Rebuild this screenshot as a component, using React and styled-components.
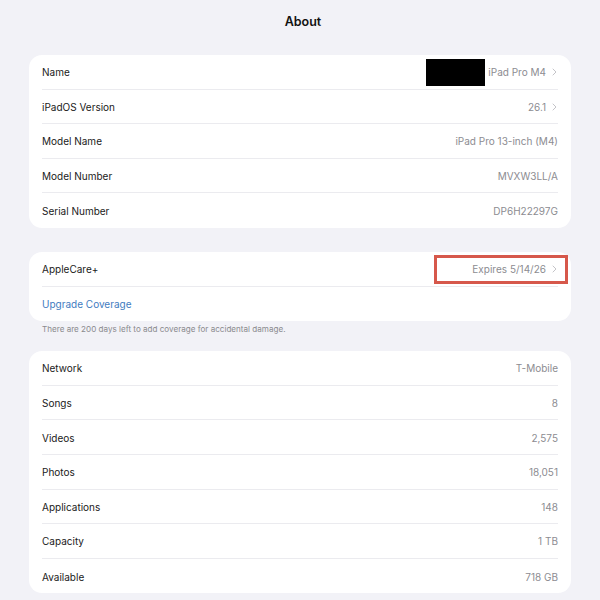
import React from "react";
import styled, { createGlobalStyle } from "styled-components";

const Global = createGlobalStyle`
  html, body { margin: 0; padding: 0; background: #f2f2f7; }
  body { font-family: Inter, "Noto Sans", Roboto, sans-serif; -webkit-font-smoothing: antialiased; }
`;

const Page = styled.div`
  width: 600px;
  height: 600px;
  box-sizing: border-box;
  padding: 0 29px;
  display: flex;
  flex-direction: column;
  background: #f2f2f7;
  overflow: hidden;
`;

const Title = styled.div`
  height: 43px;
  line-height: 43px;
  margin-bottom: 12px;
  text-align: center;
  padding-left: 6px;
  font-size: 12.5px;
  font-weight: 600;
  color: #111;
`;

const Card = styled.div`
  background: #fff;
  border-radius: 13px;
  margin-top: ${(p) => p.$mt || 0}px;
  display: flex;
  flex-direction: column;
`;

const Row = styled.div`
  height: 34.6px;
  padding: 0 13px;
  display: flex;
`;

const RowInner = styled.div`
  flex: 1;
  display: flex;
  align-items: center;
  justify-content: space-between;
  border-bottom: ${(p) => (p.$last ? "none" : "1px solid #ebebef")};
  box-sizing: border-box;
  padding-top: 1px;
`;

const Label = styled.span`
  font-size: 10px;
  color: ${(p) => (p.$link ? "#3f7cbf" : "#1a1a1a")};
`;

const Value = styled.span`
  position: relative;
  display: flex;
  align-items: center;
  font-size: 10px;
  color: #8c8c91;
`;

const Redacted = styled.span`
  width: 59px;
  height: 27px;
  background: #000;
  margin-right: 3px;
`;

const Chevron = styled.svg`
  width: 5px;
  height: 8px;
  margin-left: 6px;
  margin-right: 1px;
`;

const Highlight = styled.span`
  position: absolute;
  right: -10px;
  top: -8px;
  width: 134px;
  height: 29px;
  box-sizing: border-box;
  border: 3px solid #d6584b;
`;

const Footer = styled.div`
  padding: 3px 13px 0;
  height: 30px;
  box-sizing: border-box;
  font-size: 8.1px;
  color: #8a8a8e;
`;

const Chev = () => (
  <Chevron viewBox="0 0 5 8">
    <path d="M1 1l3 3-3 3" fill="none" stroke="#c4c4c8" strokeWidth="1" strokeLinecap="round" strokeLinejoin="round" />
  </Chevron>
);

const info = [
  { label: "Name", value: "iPad Pro M4", chevron: true, redacted: true },
  { label: "iPadOS Version", value: "26.1", chevron: true },
  { label: "Model Name", value: "iPad Pro 13-inch (M4)" },
  { label: "Model Number", value: "MVXW3LL/A" },
  { label: "Serial Number", value: "DP6H22297G" },
];

const stats = [
  { label: "Network", value: "T-Mobile" },
  { label: "Songs", value: "8" },
  { label: "Videos", value: "2,575" },
  { label: "Photos", value: "18,051" },
  { label: "Applications", value: "148" },
  { label: "Capacity", value: "1 TB" },
  { label: "Available", value: "718 GB" },
];

const Rows = ({ items }) =>
  items.map((it, i) => (
    <Row key={it.label}>
      <RowInner $last={i === items.length - 1}>
        <Label>{it.label}</Label>
        <Value>
          {it.redacted && <Redacted />}
          {it.value}
          {it.chevron && <Chev />}
        </Value>
      </RowInner>
    </Row>
  ));

export default function App() {
  return (
    <Page>
      <Global />
      <Title>About</Title>
      <Card>
        <Rows items={info} />
      </Card>
      <Card $mt={24}>
        <Row>
          <RowInner>
            <Label>AppleCare+</Label>
            <Value>
              Expires 5/14/26
              <Chev />
              <Highlight />
            </Value>
          </RowInner>
        </Row>
        <Row>
          <RowInner $last>
            <Label $link>Upgrade Coverage</Label>
          </RowInner>
        </Row>
      </Card>
      <Footer>There are 200 days left to add coverage for accidental damage.</Footer>
      <Card>
        <Rows items={stats} />
      </Card>
    </Page>
  );
}
